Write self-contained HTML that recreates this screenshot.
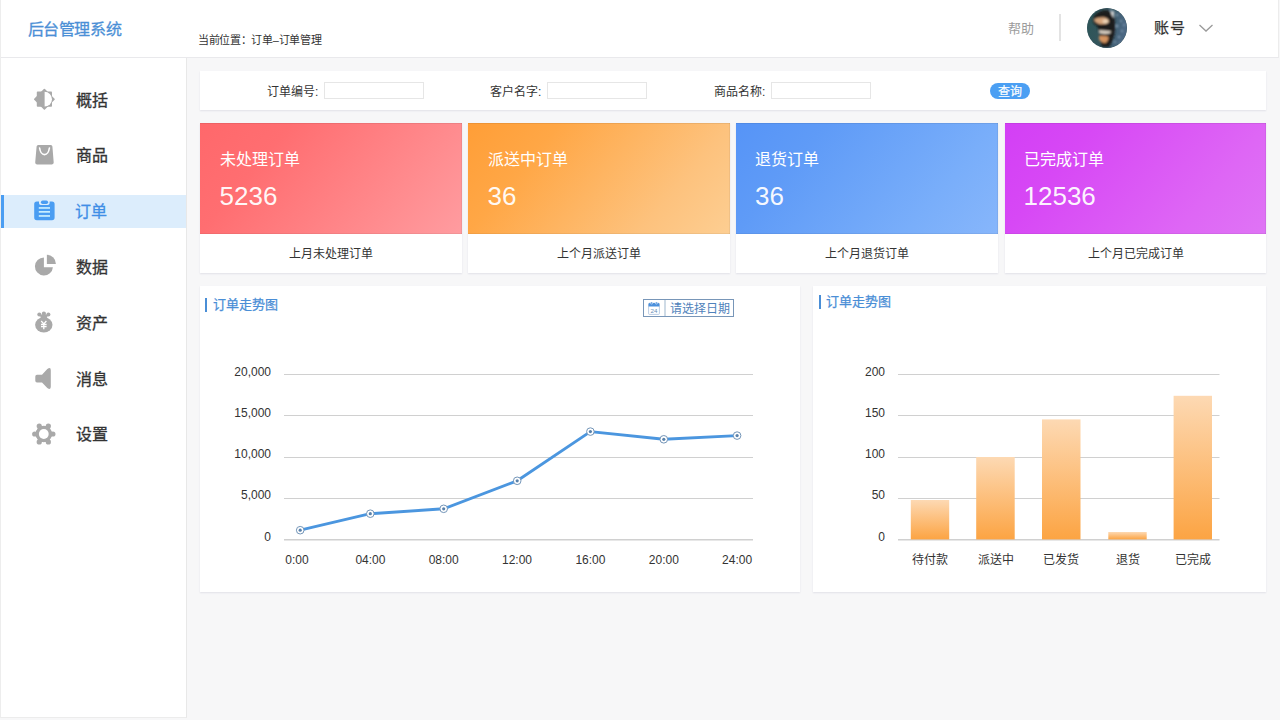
<!DOCTYPE html>
<html lang="zh-CN">
<head>
<meta charset="utf-8">
<style>
*{box-sizing:border-box;margin:0;padding:0}
html,body{width:1280px;height:720px;overflow:hidden}
body{position:relative;background:#f7f7f8;font-family:"Liberation Sans",sans-serif;color:#333}
.abs{position:absolute}
#header{position:absolute;left:0;top:0;width:1279px;height:58px;background:#fff;border-bottom:1px solid #e9e9ec;border-right:1px solid #ececec}
#logo{position:absolute;left:27.5px;top:18.5px;letter-spacing:-0.35px;-webkit-text-stroke:0.3px #4b8fd6;font-size:16px;line-height:22px;color:#4b8fd6;white-space:nowrap}
#crumb{position:absolute;left:198px;top:32.5px;font-size:11px;letter-spacing:-0.32px;line-height:14px;color:#333;white-space:nowrap}
#help{position:absolute;left:1007.5px;top:20px;font-size:13px;line-height:18px;color:#9c9c9c}
#vline{position:absolute;left:1059px;top:14px;width:2px;height:27px;background:#e3e3e3}
#avatar{position:absolute;left:1087px;top:8px;width:40px;height:40px;border-radius:50%;overflow:hidden;background:#3b5660}
#acct{position:absolute;left:1154px;top:17px;font-size:15px;letter-spacing:0.5px;line-height:22px;color:#333;-webkit-text-stroke:0.25px #333}
#side{position:absolute;left:0;top:58px;width:187px;height:660px;background:#fff;border-right:1px solid #e8e8e8;border-bottom:1px solid #ececec}
.nav{position:absolute;left:0;width:186px;height:33px}
.nav .ic{position:absolute;left:32px;top:5px;width:24px;height:24px}
.nav .tx{position:absolute;left:75.5px;top:6.5px;font-size:16px;line-height:22px;color:#333;-webkit-text-stroke:0.3px #333}
.nav.on{background:#dcedfc}
.nav.on:before{content:"";position:absolute;left:0;top:0;width:4px;height:33px;background:#4a9df2}
.nav.on .tx{color:#3f8ee6;-webkit-text-stroke:0.3px #3f8ee6;top:5.5px;left:75px}
.card{position:absolute;background:#fff;box-shadow:0 1px 1.5px rgba(205,205,220,.5)}
.lab{position:absolute;top:84px;font-size:12px;line-height:16px;color:#333;white-space:nowrap}
.inp{position:absolute;top:82px;width:100px;height:17px;border:1px solid #e6e6e6;background:#fff}
#btn{position:absolute;left:990px;top:83px;width:40px;height:15.5px;border-radius:8px;background:#4b9ff3;color:#fff;font-size:12px;line-height:18px;text-align:center;-webkit-text-stroke:0.2px #fff}
.stat{position:absolute;top:123px;width:262px;height:150px;background:#fff;box-shadow:0 1px 1.5px rgba(205,205,220,.5)}
.stat .top{position:absolute;left:0;top:0;width:100%;height:111px;box-shadow:inset 0 1px 0 rgba(0,0,0,.07),inset -1px 0 0 rgba(0,0,0,.05),inset 0 -1px 0 rgba(0,0,0,.05)}
.stat .t1{position:absolute;left:20px;top:148px;font-size:16px;line-height:22px;color:#fff}
.stat .t1{top:26px}
.stat .num{position:absolute;left:19.5px;top:58px;font-size:26px;line-height:30px;color:rgba(255,255,255,.95)}
.stat .bot{position:absolute;left:0;top:112px;width:100%;height:38px;font-size:12px;line-height:39px;text-align:center;color:#333}
.ctitle{font-size:13px;line-height:18px;color:#4a8ed6;white-space:nowrap;-webkit-text-stroke:0.25px #4a8ed6}
.blab{top:552px;width:60px;text-align:center;font-size:12px;line-height:16px;color:#333;white-space:nowrap}
</style>
</head>
<body>
<div id="header">
  <div id="logo">后台管理系统</div>
  <div id="crumb">当前位置：订单–订单管理</div>
  <div id="help">帮助</div>
  <div id="vline"></div>
  <div id="avatar"><svg width="40" height="40" viewBox="0 0 40 40">
  <defs><linearGradient id="avg" x1="0" y1="0" x2="1" y2="0.2">
    <stop offset="0" stop-color="#2c5658"/><stop offset="0.45" stop-color="#34555c"/><stop offset="1" stop-color="#4c6884"/></linearGradient>
    <clipPath id="avc"><circle cx="20" cy="20" r="19.8"/></clipPath>
    <filter id="avb" x="-20%" y="-20%" width="140%" height="140%"><feGaussianBlur stdDeviation="0.8"/></filter></defs>
  <g clip-path="url(#avc)">
  <rect width="40" height="40" fill="url(#avg)"/>
  <g filter="url(#avb)">
  <g fill="#b4c6de" opacity="0.7">
    <circle cx="30" cy="7" r="1.1"/><circle cx="34" cy="13" r="0.9"/><circle cx="30" cy="18" r="1.2"/><circle cx="35" cy="23" r="1"/><circle cx="32" cy="29" r="1.1"/><circle cx="24" cy="2.5" r="1"/><circle cx="37" cy="17" r="0.9"/><circle cx="28" cy="34" r="0.9"/><circle cx="33" cy="35" r="0.8"/><circle cx="27" cy="24" r="0.8"/>
  </g>
  <path d="M8 7 Q14 1.5 21 2.5 Q26 4 27.5 10 Q29 18 27.5 26 Q25.5 34 22 39 L15 39 Q13 33 12.5 27 Q11 21 10.5 18 Q6 16 6 12 Q6 9 8 7 Z" fill="#1d1a1c"/>
  <path d="M6.8 11.5 Q11 8.8 17 9.3 Q21.8 10.2 22 14 Q19.5 17 13 16.2 Q8.5 15.2 6.8 11.5 Z" fill="#d7a57c"/>
  <ellipse cx="18.5" cy="13.2" rx="2.8" ry="2" fill="#ecd3b6"/>
  <path d="M23.5 3.8 L27.2 3 L26.8 10 Q24.5 7.5 23.5 3.8 Z" fill="#dcdcdc"/>
  <path d="M11.8 22.3 Q17.5 22 24 23.2 L23.2 25.6 Q17 26.3 12.2 25.3 Z" fill="#d9cfc2"/>
  <path d="M12 28 Q16.5 27.2 21.5 28.6 Q21.8 32.8 18.5 35 Q14 34.6 12 31.5 Z" fill="#d4935e"/>
  </g>
  </g></svg></div>
  <div id="acct">账号</div>
  <svg class="abs" style="left:1198px;top:23px" width="16" height="10" viewBox="0 0 16 10"><path d="M1.5 2 L8 8 L14.5 2" fill="none" stroke="#9a9a9a" stroke-width="1.3"/></svg>
</div>

<div id="side">
  <div class="nav" style="top:25px"><div class="tx">概括</div></div>
  <div class="nav" style="top:80.8px"><div class="tx">商品</div></div>
  <div class="nav on" style="top:137px"><div class="tx">订单</div></div>
  <div class="nav" style="top:192.4px"><div class="tx">数据</div></div>
  <div class="nav" style="top:248.2px"><div class="tx">资产</div></div>
  <div class="nav" style="top:304px"><div class="tx">消息</div></div>
  <div class="nav" style="top:359.8px"><div class="tx">设置</div></div>
</div>


<svg class="abs" style="left:0;top:0" width="186" height="460" viewBox="0 0 186 460">
  <!-- sun -->
  <g fill="#a9a9a9">
    <rect x="36.8" y="91.6" width="15.2" height="15.2" rx="0.8"/>
    <rect x="36.8" y="91.6" width="15.2" height="15.2" rx="0.8" transform="rotate(45 44.4 99.2)"/>
  </g>
  <path d="M44.6 91.8 A7.4 7.4 0 0 1 44.6 106.6 Z" fill="#fff"/>
  <!-- bag -->
  <path d="M38.2 145 L50.8 145 Q52.3 145 52.4 146.5 L53.7 162.6 Q53.8 164.4 52 164.4 L36.9 164.4 Q35.1 164.4 35.2 162.6 L36.6 146.5 Q36.7 145 38.2 145 Z" fill="#a9a9a9"/>
  <path d="M39.6 148 Q40.6 154.6 44.5 154.6 Q48.4 154.6 49.4 148" fill="none" stroke="#fff" stroke-width="1.6" stroke-linecap="round"/>
  <!-- clipboard -->
  <path d="M36.8 201.4 L39 201.4 L39 203.2 Q39 205 40.8 205 L47.8 205 Q49.6 205 49.6 203.2 L49.6 201.4 L52 201.4 Q54.6 201.4 54.6 204 L54.6 217.6 Q54.6 220.2 52 220.2 L36.8 220.2 Q34.2 220.2 34.2 217.6 L34.2 204 Q34.2 201.4 36.8 201.4 Z" fill="#4a9df2"/>
  <rect x="40.9" y="200.5" width="7.2" height="3.5" rx="1.7" fill="#4a9df2"/>
  <g fill="#c8eeff">
    <rect x="38.8" y="207.1" width="11.2" height="1.7"/>
    <rect x="38.8" y="211" width="11.2" height="1.7"/>
    <rect x="38.8" y="215.1" width="11.2" height="1.7"/>
  </g>
  <!-- pie -->
  <path d="M43.9 257.5 L43.9 267.2 L52.9 267.2 A9 9 0 1 1 43.9 257.5 Z" fill="#a9a9a9"/>
  <path d="M46.9 254.8 A9 9 0 0 1 55.9 263.9 L46.9 263.9 Z" fill="#a9a9a9"/>
  <!-- money bag -->
  <ellipse cx="43.8" cy="324.8" rx="8.7" ry="7.6" fill="#a9a9a9"/>
  <g fill="#a9a9a9">
    <circle cx="39.3" cy="314.4" r="2"/><circle cx="43.9" cy="313.7" r="2.1"/><circle cx="48.4" cy="314.4" r="2"/>
    <path d="M39.5 314.5 L48.2 314.5 L46.6 318.5 L41.1 318.5 Z"/>
  </g>
  <path d="M41.2 321 L43.8 323.9 L46.4 321 M41 324.4 L46.6 324.4 M41 326.5 L46.6 326.5 M43.8 323.9 L43.8 329.2" fill="none" stroke="#fff" stroke-width="1.3"/>
  <!-- speaker -->
  <path d="M37 374.7 L42 374.7 L47.3 369 Q50.8 366.6 50.8 370.2 L50.8 386.8 Q50.8 390.4 47.3 388 L42 382.5 L37 382.5 Q35.3 382.5 35.3 380.8 L35.3 376.4 Q35.3 374.7 37 374.7 Z" fill="#a9a9a9"/>
  <!-- gear -->
  <g fill="#a9a9a9"><polygon points="52.90,434.00 48.35,441.88 39.25,441.88 34.70,434.00 39.25,426.12 48.35,426.12"/><circle cx="43.8" cy="434" r="8.2"/><circle cx="52.90" cy="434.00" r="2.6"/><circle cx="48.35" cy="441.88" r="2.6"/><circle cx="39.25" cy="441.88" r="2.6"/><circle cx="34.70" cy="434.00" r="2.6"/><circle cx="39.25" cy="426.12" r="2.6"/><circle cx="48.35" cy="426.12" r="2.6"/></g>
  <circle cx="43.8" cy="434" r="4.9" fill="#fff"/>
</svg>

<!-- search bar -->
<div class="card" style="left:200px;top:71px;width:1066px;height:39px"></div>
<div class="lab" style="left:267px">订单编号:</div>
<div class="inp" style="left:324px"></div>
<div class="lab" style="left:490px">客户名字:</div>
<div class="inp" style="left:547px"></div>
<div class="lab" style="left:714px">商品名称:</div>
<div class="inp" style="left:771px"></div>
<div id="btn">查询</div>

<!-- stat cards -->
<div class="stat" style="left:200px">
  <div class="top" style="background:linear-gradient(130deg,#ff686b 0%,#ff6e71 26%,#ff8c8f 74%,#ff9ca0 100%)"></div>
  <div class="t1">未处理订单</div><div class="num">5236</div>
  <div class="bot">上月未处理订单</div>
</div>
<div class="stat" style="left:468px">
  <div class="top" style="background:linear-gradient(130deg,#ff9e37 0%,#ffa746 26%,#fdc27d 74%,#fdce92 100%)"></div>
  <div class="t1">派送中订单</div><div class="num">36</div>
  <div class="bot">上个月派送订单</div>
</div>
<div class="stat" style="left:736px">
  <div class="top" style="background:linear-gradient(130deg,#5694f7 0%,#5f9bf7 26%,#79aefa 74%,#87b6fb 100%)"></div>
  <div class="t1" style="left:19px">退货订单</div><div class="num" style="left:19px">36</div>
  <div class="bot">上个月退货订单</div>
</div>
<div class="stat" style="left:1005px;width:261px">
  <div class="top" style="background:linear-gradient(130deg,#d33ff5 0%,#d748f5 26%,#de66f5 74%,#df74f5 100%)"></div>
  <div class="t1" style="left:19px">已完成订单</div><div class="num" style="left:18.5px">12536</div>
  <div class="bot">上个月已完成订单</div>
</div>

<!-- chart cards -->
<div class="card" style="left:200px;top:286px;width:600px;height:306px"></div>
<div class="card" style="left:813px;top:286px;width:453px;height:306px"></div>


<!-- chart 1 -->
<div class="abs" style="left:205px;top:298px;width:2px;height:14px;background:#4a8ed6"></div>
<div class="abs ctitle" style="left:213px;top:296px">订单走势图</div>
<div class="abs" style="left:643px;top:299px;width:91px;height:17.5px;border:1px solid #7896b8;background:#fff"></div>
<div class="abs" style="left:664px;top:300px;width:2px;height:16px;background:#cfdbe6"></div>
<svg class="abs" style="left:647px;top:301px" width="14" height="15" viewBox="0 0 14 15">
  <rect x="1.6" y="2.2" width="10.8" height="11.2" rx="0.8" fill="#fff" stroke="#a9c0dc" stroke-width="0.8"/>
  <path d="M1.6 5.4 L1.6 3.4 Q1.6 2 3 2 L11 2 Q12.4 2 12.4 3.4 L12.4 5.4 Z" fill="#4a8fdc"/>
  <circle cx="4.6" cy="2" r="1.1" fill="#4a8fdc" stroke="#fff" stroke-width="0.5"/><circle cx="9.4" cy="2" r="1.1" fill="#4a8fdc" stroke="#fff" stroke-width="0.5"/>
  <text x="7" y="11.9" font-size="6.2" text-anchor="middle" fill="#6a8fb8" font-family="Liberation Sans">24</text>
</svg>
<div class="abs" style="left:670px;top:301px;font-size:12px;line-height:16px;color:#4f82bb;white-space:nowrap">请选择日期</div>

<svg class="abs" style="left:0;top:0" width="1280" height="720" viewBox="0 0 1280 720">
  <g stroke="#d0d0d0" stroke-width="1">
    <line x1="284" y1="374.5" x2="753" y2="374.5"/>
    <line x1="284" y1="415.5" x2="753" y2="415.5"/>
    <line x1="284" y1="457.5" x2="753" y2="457.5"/>
    <line x1="284" y1="498.5" x2="753" y2="498.5"/>
    <line x1="284" y1="539.7" x2="753" y2="539.7" stroke-width="1.4"/>
  </g>
  <g font-family="Liberation Sans" font-size="12" fill="#333" text-anchor="end">
    <text x="271" y="375.5">20,000</text>
    <text x="271" y="416.8">15,000</text>
    <text x="271" y="458">10,000</text>
    <text x="271" y="499.3">5,000</text>
    <text x="271" y="541">0</text>
  </g>
  <g font-family="Liberation Sans" font-size="12" fill="#333" text-anchor="middle">
    <text x="297" y="563.5">0:00</text>
    <text x="370.4" y="563.5">04:00</text>
    <text x="443.7" y="563.5">08:00</text>
    <text x="517" y="563.5">12:00</text>
    <text x="590.4" y="563.5">16:00</text>
    <text x="663.8" y="563.5">20:00</text>
    <text x="737.1" y="563.5">24:00</text>
  </g>
  <polyline points="300.2,530.2 370.3,513.7 443.7,508.8 517.2,480.8 590.4,431.6 663.8,439.3 737.1,435.6" fill="none" stroke="#4b96df" stroke-width="2.9" stroke-linejoin="round"/>
  <g fill="#fff" stroke="#7395b8" stroke-width="1">
    <circle cx="300.2" cy="530.2" r="3.8"/>
    <circle cx="370.3" cy="513.7" r="3.8"/>
    <circle cx="443.7" cy="508.8" r="3.8"/>
    <circle cx="517.2" cy="480.8" r="3.8"/>
    <circle cx="590.4" cy="431.6" r="3.8"/>
    <circle cx="663.8" cy="439.3" r="3.8"/>
    <circle cx="737.1" cy="435.6" r="3.8"/>
  </g>
  <g fill="#5a82ab">
    <circle cx="300.2" cy="530.2" r="1.6"/>
    <circle cx="370.3" cy="513.7" r="1.6"/>
    <circle cx="443.7" cy="508.8" r="1.6"/>
    <circle cx="517.2" cy="480.8" r="1.6"/>
    <circle cx="590.4" cy="431.6" r="1.6"/>
    <circle cx="663.8" cy="439.3" r="1.6"/>
    <circle cx="737.1" cy="435.6" r="1.6"/>
  </g>

  <!-- chart 2 -->
  <defs>
    <linearGradient id="bg" x1="0" y1="0" x2="0" y2="1">
      <stop offset="0" stop-color="#fdd9b3"/>
      <stop offset="1" stop-color="#fca443"/>
    </linearGradient>
    <linearGradient id="bg2" x1="0" y1="395.8" x2="0" y2="539.6" gradientUnits="userSpaceOnUse">
      <stop offset="0" stop-color="#fddbb6"/>
      <stop offset="1" stop-color="#fca443"/>
    </linearGradient>
  </defs>
  <g stroke="#d0d0d0" stroke-width="1">
    <line x1="898" y1="374.5" x2="1219.5" y2="374.5"/>
    <line x1="898" y1="415.5" x2="1219.5" y2="415.5"/>
    <line x1="898" y1="457.5" x2="1219.5" y2="457.5"/>
    <line x1="898" y1="498.5" x2="1219.5" y2="498.5"/>
    <line x1="898" y1="539.7" x2="1219.5" y2="539.7" stroke-width="1.4"/>
  </g>
  <g font-family="Liberation Sans" font-size="12" fill="#333" text-anchor="end">
    <text x="885" y="375.5">200</text>
    <text x="885" y="416.8">150</text>
    <text x="885" y="458">100</text>
    <text x="885" y="499.3">50</text>
    <text x="885" y="541">0</text>
  </g>
  <g fill="url(#bg)">
    <rect x="910.8" y="500" width="38.4" height="39.4"/>
    <rect x="976.2" y="457" width="38.5" height="82.4"/>
    <rect x="1042" y="419.4" width="38.5" height="120"/>
    <rect x="1108.3" y="532" width="38.4" height="7.4"/>
    <rect x="1173.6" y="395.8" width="38.4" height="143.6"/>
  </g>
</svg>
<div class="abs blab" style="left:900px">待付款</div>
<div class="abs blab" style="left:965.5px">派送中</div>
<div class="abs blab" style="left:1031.25px">已发货</div>
<div class="abs blab" style="left:1097.5px">退货</div>
<div class="abs blab" style="left:1162.8px">已完成</div>
<div class="abs" style="left:818.5px;top:294.5px;width:2px;height:14.5px;background:#4a8ed6"></div>
<div class="abs ctitle" style="left:826px;top:293px">订单走势图</div>

<div class="abs" style="left:0;top:0;width:1px;height:718px;background:#ededed"></div>
</body>
</html>
